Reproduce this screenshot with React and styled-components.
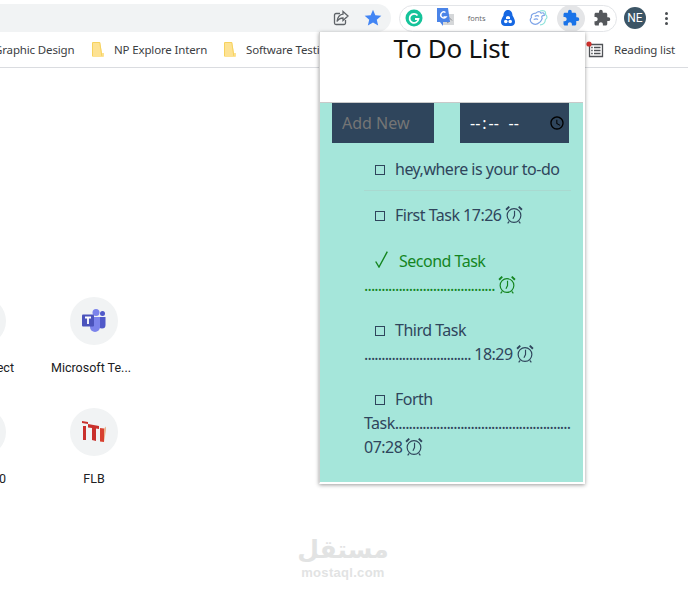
import React from 'react'
import styled, { createGlobalStyle } from 'styled-components'
import { MdExtension, MdStar } from 'react-icons/md'

const POPUP_FONT = '"Noto Sans", "Open Sans", sans-serif'

const GlobalStyle = createGlobalStyle`
  html, body {
    margin: 0;
    padding: 0;
    background: white;
  }
  * {
    box-sizing: border-box;
  }
`

const PageUI = styled('div')`
  position: relative;
  width: 688px;
  height: 589px;
  overflow: hidden;
  background: white;
  font-family: Roboto, sans-serif;
`

const ToolbarUI = styled('div')`
  display: flex;
  align-items: center;
  height: 32px;
  padding-top: 4px;
`

const OmniboxUI = styled('div')`
  display: flex;
  align-items: center;
  justify-content: flex-end;
  gap: 14px;
  width: 391px;
  height: 28px;
  padding-right: 8px;
  background: #f1f3f4;
  border-radius: 0 14px 14px 0;
`

const ExtensionPillUI = styled('div')`
  display: flex;
  align-items: center;
  justify-content: space-between;
  width: 218px;
  height: 27px;
  margin-left: 8px;
  border: 1px solid #e3e5e8;
  border-radius: 14px;
`

const ExtensionSlotUI = styled('div')`
  display: flex;
  align-items: center;
  justify-content: center;
  width: 28px;
  height: 27px;
  border-radius: 50%;
  background: ${({ active }) => (active ? '#e4e5e7' : 'transparent')};
  color: ${({ active }) => (active ? '#1a73e8' : '#55585c')};
`

const FontsLabelUI = styled('span')`
  font-family: "Open Sans", sans-serif;
  font-size: 7.5px;
  color: #5f6368;
`

const AvatarUI = styled('div')`
  display: flex;
  align-items: center;
  justify-content: center;
  width: 22px;
  height: 22px;
  margin-left: 7px;
  border-radius: 50%;
  background: #3c5566;
  color: white;
  font-size: 12px;
`

const MenuDotsUI = styled('div')`
  display: flex;
  flex-direction: column;
  gap: 2px;
  margin-left: 19px;

  i {
    display: block;
    width: 3px;
    height: 3px;
    border-radius: 50%;
    background: #4a4d51;
  }
`

const BookmarksUI = styled('div')`
  display: flex;
  align-items: center;
  height: 36px;
  border-bottom: 1px solid #dadce0;
  padding-bottom: 1px;
  font-family: ${POPUP_FONT};
  font-size: 11.5px;
  letter-spacing: -0.15px;
  color: #3c4043;
  white-space: nowrap;
`

const BookmarkUI = styled('div')`
  display: flex;
  flex: none;
  align-items: center;
  gap: 10px;
  width: ${({ width }) => width}px;
  margin-left: ${({ offset }) => offset || 0}px;
`

const GridUI = styled('div')`
  display: grid;
  grid-template-columns: 112px 112px;
  row-gap: 32px;
  margin: 229px 0 0 -74px;
  width: 224px;
`

const TileUI = styled('div')`
  display: flex;
  flex-direction: column;
  align-items: center;
  gap: 15px;
`

const TileCircleUI = styled('div')`
  display: flex;
  align-items: center;
  justify-content: center;
  width: 48px;
  height: 48px;
  border-radius: 50%;
  background: #f1f3f4;
`

const TileLabelUI = styled('div')`
  align-self: ${({ inset }) => (inset ? 'flex-end' : 'center')};
  height: 16px;
  margin-right: ${({ inset, pull }) => inset || pull || 0}px;
  font-size: 12.5px;
  line-height: 16px;
  color: #202124;
`

const WatermarkUI = styled('div')`
  display: flex;
  flex-direction: column;
  align-items: center;
  margin: 46px 0 0 -2px;
  color: #e2e3e3;
  line-height: 1;
`

const WatermarkArabicUI = styled('div')`
  font-family: "DejaVu Sans", sans-serif;
  font-size: 25px;
  font-weight: 700;
  line-height: 33px;
`

const WatermarkLatinUI = styled('div')`
  font-family: "Liberation Sans", sans-serif;
  font-size: 13px;
  font-weight: 700;
  letter-spacing: 0.3px;
`

const PopupUI = styled('div')`
  position: absolute;
  top: 32px;
  left: 319px;
  display: flex;
  flex-direction: column;
  width: 266px;
  height: 452px;
  background: white;
  border-left: 1px solid #d0d0d0;
  border-right: 2px solid white;
  border-bottom: 2px solid white;
  box-shadow: 0 1px 4px rgba(0, 0, 0, 0.4);
  font-family: ${POPUP_FONT};
`

const PopupHeaderUI = styled('div')`
  flex: none;
  height: 71px;
  border-bottom: 1px solid #c9c9c9;
  text-align: center;
  font-size: 26px;
  line-height: 32px;
  letter-spacing: -0.3px;
  color: #111;
`

const PopupBodyUI = styled('div')`
  flex: 1;
  background: #a5e6da;
`

const InputsUI = styled('div')`
  display: flex;
  gap: 26px;
  padding-left: 12px;
`

const FieldUI = styled('input')`
  width: ${({ width }) => width}px;
  height: 40px;
  padding: 0 10px;
  border: 0;
  border-radius: 0;
  outline: 0;
  background: #2f455c;
  font-family: ${POPUP_FONT};
  font-size: 16px;
  color: white;

  &::placeholder {
    color: #757575;
    opacity: 1;
  }

  &::-webkit-datetime-edit {
    margin-left: -1px;
  }

  &::-webkit-datetime-edit-text {
    padding: 0 1px;
  }

  &::-webkit-datetime-edit-ampm-field {
    margin-left: 3px;
  }

  &::-webkit-calendar-picker-indicator {
    margin: 0 -10px 0 0;
  }
`

const TaskListUI = styled('ul')`
  width: 207px;
  margin: 2px 0 0 44px;
  padding: 0;
  list-style: none;
  font-size: 16px;
  line-height: 24px;
  letter-spacing: -0.5px;
`

const TaskUI = styled('li')`
  padding: ${({ done }) => (done ? '13px' : '12px')} 0 9px;
  color: ${({ done }) => (done ? '#14851f' : '#2f455c')};
  border-bottom: ${({ divided }) => (divided ? '1px solid #a9d9d0' : '0')};
`

const TaskBoxUI = styled('span')`
  display: inline-block;
  width: 10px;
  height: 10px;
  margin: 0 10px 0 11px;
  border: 1.5px solid currentColor;
`

const TaskTickUI = styled('svg')`
  display: inline-block;
  width: 13px;
  height: 17px;
  margin: 0 11px 0 11px;
  vertical-align: -1px;
`

const DotsUI = styled('span')`
  letter-spacing: -0.85px;
`

const AlarmUI = styled('svg')`
  display: inline-block;
  width: 18px;
  height: 19px;
  margin-left: 3px;
  vertical-align: -3px;
`

const ShareIcon = () => (
  <svg width="16" height="16" viewBox="0 0 16 16" fill="none" stroke="#5f6368" strokeWidth="1.3">
    <path d="M7 3.5H3a1.5 1.5 0 0 0-1.5 1.5v8A1.5 1.5 0 0 0 3 14.5h8a1.5 1.5 0 0 0 1.5-1.5V10" />
    <path d="M10 1.5l5 4.5-5 4.5V8c-3 0-4.5 1-6 3.5C4.500 8 6.500 4.500 10 4.200z" />
  </svg>
)

const GrammarlyIcon = () => (
  <svg width="18" height="18" viewBox="0 0 18 18" fill="none">
    <circle cx="9" cy="9" r="8.500" fill="#15c39a" />
    <path d="M12.500 6.500A4.500 4.500 0 1 0 13.500 10H10" stroke="white" strokeWidth="1.800" />
  </svg>
)

const TranslateIcon = () => (
  <svg width="17" height="20" viewBox="0 0 17 20">
    <path d="M6 6h11v11H6z" fill="#d5d7d9" />
    <path d="M9 12.500l3 -3 3 3M10 15l3-2" stroke="#8b8e92" fill="none" />
    <path d="M0 0h11l2 14H6v4l-3-4H0z" fill="#4a84e8" />
    <path d="M8.500 4.500A3 3 0 1 0 9 9H6.500" stroke="white" strokeWidth="1.400" fill="none" />
  </svg>
)

const DropIcon = () => (
  <svg width="14" height="16" viewBox="0 0 14 16">
    <path d="M7 0c3 0 4.500 2.500 4.500 5.500C13 8 14 10 14 12c0 2.500-2 4-4 4H4c-2 0-4-1.500-4-4 0-2 1-4 2.500-6.500C2.500 2.500 4 0 7 0z" fill="#1668e3" />
    <circle cx="4.800" cy="11.500" r="1.800" fill="white" />
    <circle cx="9.200" cy="11.500" r="1.800" fill="white" />
    <path d="M5 7c1.500-1.500 2.500-1.500 4 0v2H5z" fill="white" />
  </svg>
)

const CloudIcon = () => (
  <svg width="20" height="17" viewBox="0 0 18 16" fill="none" strokeWidth="1.100">
    <path d="M6 3c2-2 4-2 5 0 2-1 3 0 3 2-2 0-3 1-2 3-1 2-1 3-3 4-2 2-5 2-7 0C1 11 0 9 2 7c-1-2 1-4 4-4z" stroke="#7ea4e8" />
    <path d="M5 6c2-1 3-1 4 0M4 9c2-1 3-1 4 0" stroke="#7ea4e8" />
    <path d="M10 1c3-1 6 0 5 3 2 2 2 4 0 5 0 3-2 5-5 5" stroke="#8fe3db" />
  </svg>
)

const ReadingListIcon = () => (
  <svg width="18" height="17" viewBox="0 0 18 17" fill="none">
    <path d="M3.500 3.500h13v12h-13z" stroke="#4f5256" strokeWidth="1.300" />
    <path d="M8 6.500h6.500M8 9.500h6.500M8 12.500h6.500M5.200 6.500h1.500M5.200 9.500h1.500M5.200 12.500h1.500" stroke="#4f5256" strokeWidth="1.300" />
    <circle cx="3" cy="3" r="2.600" fill="#d0312d" />
  </svg>
)

const FolderIcon = () => (
  <svg width="12" height="15" viewBox="0 0 12 15">
    <path d="M0 1a1 1 0 0 1 1-1h7l2 11h2v3a1 1 0 0 1-1 1H1a1 1 0 0 1-1-1z" fill="#fde293" />
    <path d="M.5 1v13M.5.5h7.300L9.800 14" stroke="#f6d25e" fill="none" />
  </svg>
)

const TeamsIcon = () => (
  <svg width="24" height="24" viewBox="0 0 24 24">
    <circle cx="14" cy="3.500" r="3.500" fill="#7b83eb" />
    <circle cx="20.500" cy="4.500" r="2.500" fill="#5059c9" />
    <path d="M16 8h7.500v8a3.500 3.500 0 0 1-7 0z" fill="#5059c9" />
    <path d="M8 8h10v10a5 5 0 0 1-10 0z" fill="#7b83eb" />
    <rect x="0" y="5.500" width="12" height="12" rx="1" fill="#4b53bc" />
    <path d="M3 8.500h6M6 8.500v6.500" stroke="white" strokeWidth="1.800" />
  </svg>
)

const FlbIcon = () => (
  <svg width="24" height="24" viewBox="0 0 24 24">
    <path d="M0 1l6 1v2L0 3z" fill="#c9302c" />
    <path d="M1 6h3v14H1zM6 4l11 2v3l-3-.5V21l-4-1V8L6 7.500z" fill="#c9302c" />
    <path d="M18 8l4 .5V22l-4-.5z" fill="#d8402f" />
    <path d="M22 8.500l2-2V10l-2 12z" fill="#e8b48f" />
  </svg>
)

const TimeAlarm = () => (
  <AlarmUI viewBox="0 0 17 18" fill="none" stroke="currentColor" strokeWidth="1.100">
    <circle cx="8.500" cy="10" r="6.500" />
    <path d="M9 5.500V10L7.500 13" />
    <path d="M1 4.500L4 1.500M16 4.500L13 1.500" strokeWidth="1.800" />
    <path d="M4 15.500L2.500 17.500M13 15.500L14.500 17.500" />
  </AlarmUI>
)

const TaskBox = () => <TaskBoxUI />

const TaskTick = () => (
  <TaskTickUI viewBox="0 0 13 17" fill="none" stroke="currentColor" strokeWidth="1.400">
    <path d="M.7 10.500L4 16L12.300 .7" />
  </TaskTickUI>
)

export default function App() {
  return (
    <PageUI>
      <GlobalStyle />
      <ToolbarUI>
        <OmniboxUI>
          <ShareIcon />
          <MdStar size={20} color="#4285f4" />
        </OmniboxUI>
        <ExtensionPillUI>
          <ExtensionSlotUI><GrammarlyIcon /></ExtensionSlotUI>
          <ExtensionSlotUI><TranslateIcon /></ExtensionSlotUI>
          <ExtensionSlotUI><FontsLabelUI>fonts</FontsLabelUI></ExtensionSlotUI>
          <ExtensionSlotUI><DropIcon /></ExtensionSlotUI>
          <ExtensionSlotUI><CloudIcon /></ExtensionSlotUI>
          <ExtensionSlotUI active><MdExtension size={18} /></ExtensionSlotUI>
          <ExtensionSlotUI><MdExtension size={18} /></ExtensionSlotUI>
        </ExtensionPillUI>
        <AvatarUI>NE</AvatarUI>
        <MenuDotsUI><i /><i /><i /></MenuDotsUI>
      </ToolbarUI>

      <BookmarksUI>
        <BookmarkUI width={92} offset={-6}>Graphic Design</BookmarkUI>
        <BookmarkUI width={132} offset={6}><FolderIcon />NP Explore Intern</BookmarkUI>
        <BookmarkUI width={134}><FolderIcon />Software Testing</BookmarkUI>
        <BookmarkUI width={92} offset={228}><ReadingListIcon />Reading list</BookmarkUI>
      </BookmarksUI>

      <GridUI>
        <TileUI>
          <TileCircleUI />
          <TileLabelUI inset={24}>ect</TileLabelUI>
        </TileUI>
        <TileUI>
          <TileCircleUI><TeamsIcon /></TileCircleUI>
          <TileLabelUI pull={6}>Microsoft Te...</TileLabelUI>
        </TileUI>
        <TileUI>
          <TileCircleUI />
          <TileLabelUI inset={32}>0</TileLabelUI>
        </TileUI>
        <TileUI>
          <TileCircleUI><FlbIcon /></TileCircleUI>
          <TileLabelUI>FLB</TileLabelUI>
        </TileUI>
      </GridUI>

      <WatermarkUI>
        <WatermarkArabicUI>مستقل</WatermarkArabicUI>
        <WatermarkLatinUI>mostaql.com</WatermarkLatinUI>
      </WatermarkUI>

      <PopupUI>
        <PopupHeaderUI>To Do List</PopupHeaderUI>
        <PopupBodyUI>
          <InputsUI>
            <FieldUI width={102} placeholder="Add New" />
            <FieldUI width={109} type="time" />
          </InputsUI>
          <TaskListUI>
            <TaskUI divided><TaskBox />hey,where is your to-do</TaskUI>
            <TaskUI><TaskBox />First Task 17:26<TimeAlarm /></TaskUI>
            <TaskUI done>
              <TaskTick />Second Task <DotsUI>......................................</DotsUI><TimeAlarm />
            </TaskUI>
            <TaskUI><TaskBox />Third Task <DotsUI>...............................</DotsUI> 18:29<TimeAlarm /></TaskUI>
            <TaskUI><TaskBox />Forth Task<DotsUI>...................................................</DotsUI> 07:28<TimeAlarm /></TaskUI>
          </TaskListUI>
        </PopupBodyUI>
      </PopupUI>
    </PageUI>
  )
}
